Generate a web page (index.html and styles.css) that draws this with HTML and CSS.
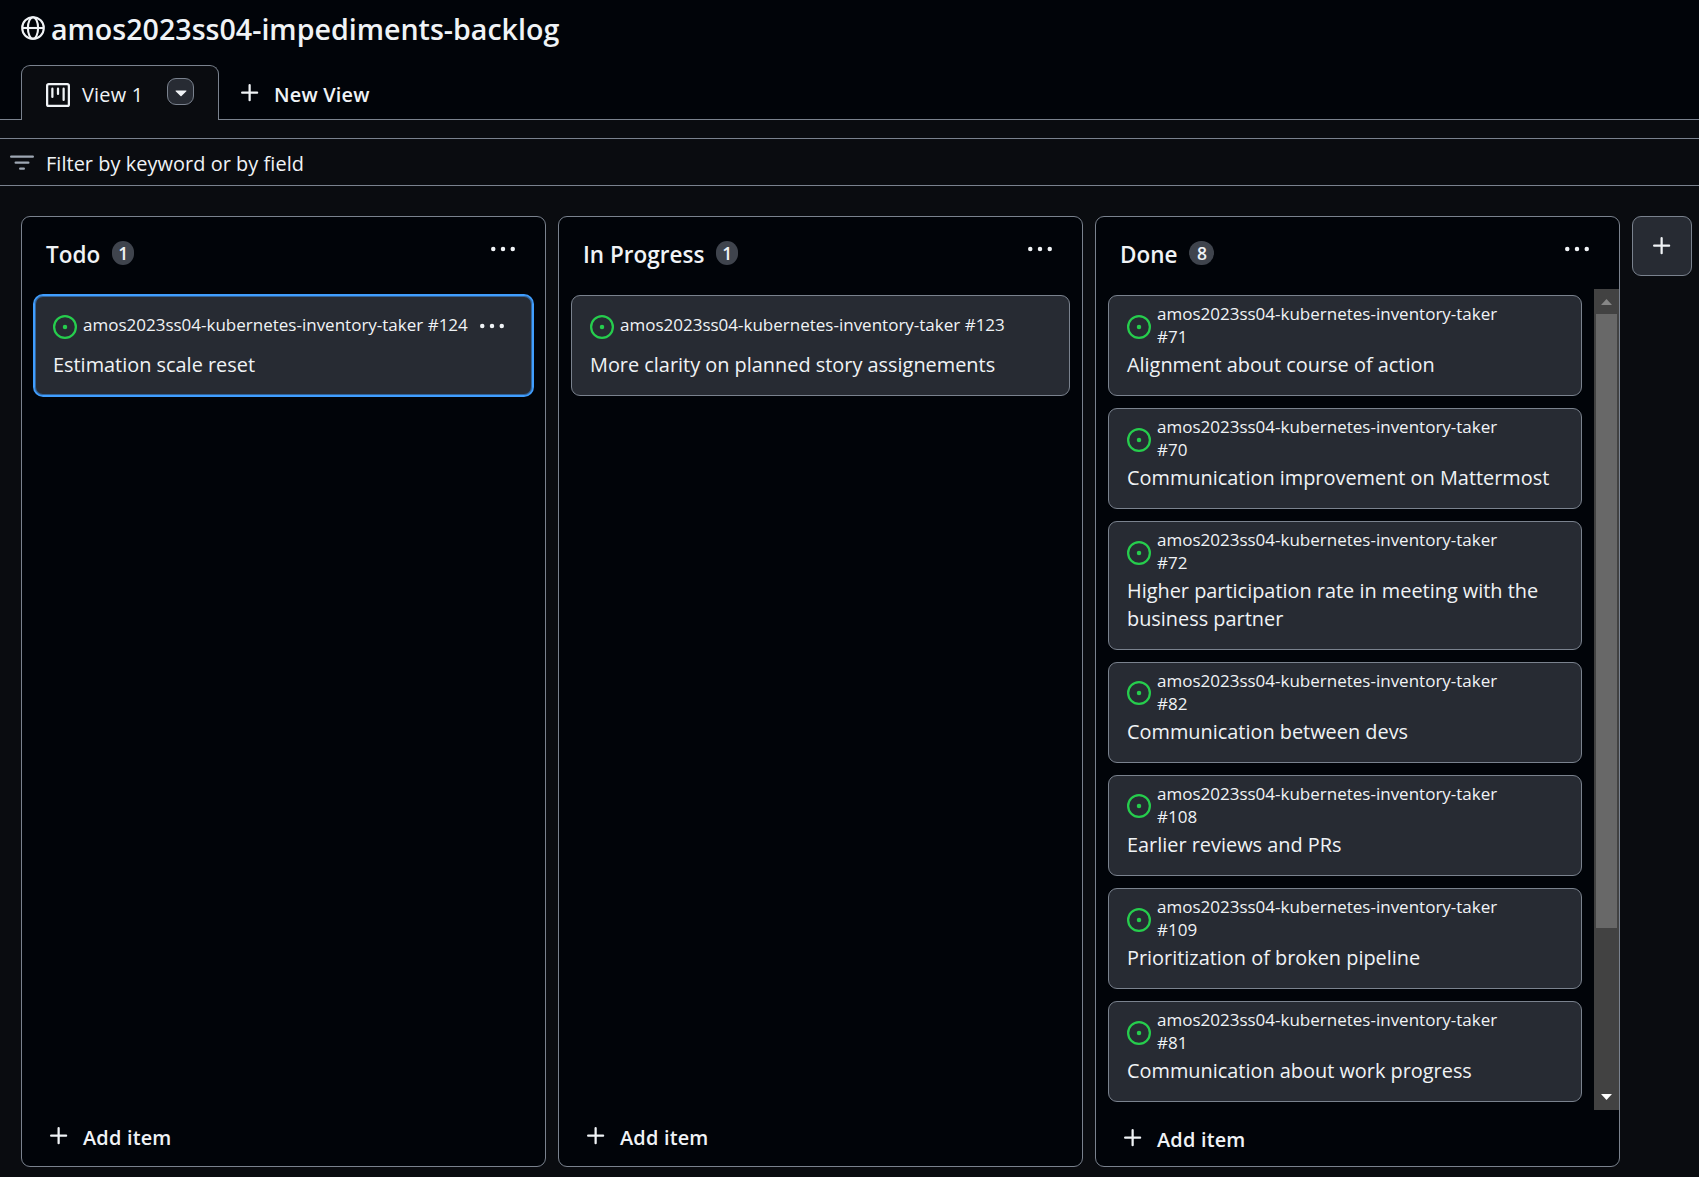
FILE: index.html
```
<!DOCTYPE html>
<html lang="en">
<head>
<meta charset="utf-8">
<title>amos2023ss04-impediments-backlog</title>
<link rel="stylesheet" href="styles.css">
</head>
<body>
<svg width="0" height="0" class="sprite" aria-hidden="true">
  <symbol id="issue" viewBox="0 0 16 16"><path d="M8 9.5a1.5 1.5 0 1 0 0-3 1.5 1.5 0 0 0 0 3Z"/><path d="M8 0a8 8 0 1 1 0 16A8 8 0 0 1 8 0ZM1.5 8a6.5 6.5 0 1 0 13 0 6.5 6.5 0 0 0-13 0Z"/></symbol>
  <symbol id="dots" viewBox="0 0 16 16"><path d="M8 9.5a1.5 1.5 0 1 0 0-3 1.5 1.5 0 0 0 0 3ZM1.5 9.5a1.5 1.5 0 1 0 0-3 1.5 1.5 0 0 0 0 3ZM14.5 9.5a1.5 1.5 0 1 0 0-3 1.5 1.5 0 0 0 0 3Z"/></symbol>
  <symbol id="plus" viewBox="0 0 16 16"><path d="M7.75 2a.75.75 0 0 1 .75.75V7h4.25a.75.75 0 0 1 0 1.5H8.5v4.25a.75.75 0 0 1-1.5 0V8.5H2.75a.75.75 0 0 1 0-1.5H7V2.75A.75.75 0 0 1 7.75 2Z"/></symbol>
</svg>

<header class="title-bar">
  <svg class="icon" viewBox="0 0 16 16"><g fill="none" stroke="currentColor" stroke-width="1.4"><circle cx="8" cy="8" r="7.2"/><ellipse cx="8" cy="8" rx="3.4" ry="7.2"/><path d="M.8 8h14.4"/></g></svg>
  <h1>amos2023ss04-impediments-backlog</h1>
</header>

<nav class="tabs">
  <div class="tab">
    <svg class="icon" viewBox="0 0 16 16"><path fill-rule="evenodd" d="M1.75 0h12.5C15.216 0 16 .784 16 1.750v12.500A1.750 1.750 0 0 1 14.250 16H1.750A1.750 1.750 0 0 1 0 14.250V1.750C0 .784.784 0 1.750 0ZM1.500 1.750v12.500c0 .138.112.25.25.25h12.500a.25.25 0 0 0 .25-.25V1.750a.25.25 0 0 0-.25-.25H1.750a.25.25 0 0 0-.25.25ZM11.750 3a.75.75 0 0 1 .75.75v7.500a.75.75 0 0 1-1.500 0v-7.500a.75.75 0 0 1 .75-.75Zm-8.250.75a.75.75 0 0 1 1.500 0v5.500a.75.75 0 0 1-1.500 0ZM8 3a.75.75 0 0 1 .75.75v3.500a.75.75 0 0 1-1.500 0v-3.500A.75.75 0 0 1 8 3Z"/></svg>
    <span class="tab-name">View 1</span>
    <button class="tab-menu" aria-label="View options"><svg class="icon" viewBox="0 0 16 16"><path d="m4.427 7.427 3.396 3.396a.25.25 0 0 0 .354 0l3.396-3.396A.25.25 0 0 0 11.396 7H4.604a.25.25 0 0 0-.177.427Z"/></svg></button>
  </div>
  <div class="new-view"><svg class="icon"><use href="#plus"/></svg><span>New View</span></div>
</nav>

<div class="filter">
  <svg class="icon" viewBox="0 0 16 16"><path d="M.75 3h14.5a.75.75 0 0 1 0 1.5H.75a.75.75 0 0 1 0-1.5ZM3 7.75A.75.75 0 0 1 3.75 7h8.5a.75.75 0 0 1 0 1.5h-8.5A.75.75 0 0 1 3 7.75Zm3 4a.75.75 0 0 1 .75-.75h2.5a.75.75 0 0 1 0 1.5h-2.5a.75.75 0 0 1-.75-.75Z"/></svg>
  <span>Filter by keyword or by field</span>
</div>

<main class="board">
  <section class="column">
    <div class="column-head"><h2>Todo</h2><span class="count">1</span><svg class="icon more"><use href="#dots"/></svg></div>
    <div class="column-body"><div class="cards">
      <article class="card selected"><div class="ref"><svg class="icon"><use href="#issue"/></svg><span>amos2023ss04-kubernetes-inventory-taker #124</span><svg class="icon card-more"><use href="#dots"/></svg></div><p>Estimation scale reset</p></article>
    </div></div>
    <div class="add"><svg class="icon"><use href="#plus"/></svg><span>Add item</span></div>
  </section>

  <section class="column">
    <div class="column-head"><h2>In Progress</h2><span class="count">1</span><svg class="icon more"><use href="#dots"/></svg></div>
    <div class="column-body"><div class="cards">
      <article class="card"><div class="ref"><svg class="icon"><use href="#issue"/></svg><span>amos2023ss04-kubernetes-inventory-taker #123</span></div><p>More clarity on planned story assignements</p></article>
    </div></div>
    <div class="add"><svg class="icon"><use href="#plus"/></svg><span>Add item</span></div>
  </section>

  <section class="column scrolls">
    <div class="column-head"><h2>Done</h2><span class="count">8</span><svg class="icon more"><use href="#dots"/></svg></div>
    <div class="column-body"><div class="cards">
      <article class="card"><div class="ref"><svg class="icon"><use href="#issue"/></svg><span>amos2023ss04-kubernetes-inventory-taker<br>#71</span></div><p>Alignment about course of action</p></article>
      <article class="card"><div class="ref"><svg class="icon"><use href="#issue"/></svg><span>amos2023ss04-kubernetes-inventory-taker<br>#70</span></div><p>Communication improvement on Mattermost</p></article>
      <article class="card"><div class="ref"><svg class="icon"><use href="#issue"/></svg><span>amos2023ss04-kubernetes-inventory-taker<br>#72</span></div><p>Higher participation rate in meeting with the<br>business partner</p></article>
      <article class="card"><div class="ref"><svg class="icon"><use href="#issue"/></svg><span>amos2023ss04-kubernetes-inventory-taker<br>#82</span></div><p>Communication between devs</p></article>
      <article class="card"><div class="ref"><svg class="icon"><use href="#issue"/></svg><span>amos2023ss04-kubernetes-inventory-taker<br>#108</span></div><p>Earlier reviews and PRs</p></article>
      <article class="card"><div class="ref"><svg class="icon"><use href="#issue"/></svg><span>amos2023ss04-kubernetes-inventory-taker<br>#109</span></div><p>Prioritization of broken pipeline</p></article>
      <article class="card"><div class="ref"><svg class="icon"><use href="#issue"/></svg><span>amos2023ss04-kubernetes-inventory-taker<br>#81</span></div><p>Communication about work progress</p></article>
    </div>
    <div class="scrollbar">
      <svg class="arrow up" viewBox="0 0 25 25"><path d="M7 16h11l-5.500-6z"/></svg>
      <div class="thumb"></div>
      <svg class="arrow down" viewBox="0 0 25 25"><path d="M7 9h11l-5.500 6z"/></svg>
    </div></div>
    <div class="add"><svg class="icon"><use href="#plus"/></svg><span>Add item</span></div>
  </section>

  <button class="add-column" aria-label="Add column"><svg class="icon"><use href="#plus"/></svg></button>
</main>
</body>
</html>
```
FILE: styles.css
```
* { box-sizing: border-box; }
body {
  margin: 0;
  height: 1177px;
  overflow: hidden;
  display: flex;
  flex-direction: column;
  background: #0a0c10;
  color: #f0f3f6;
  font-family: "Open Sans", "Noto Sans", sans-serif;
  font-size: 19.9px;
  line-height: 27px;
}
h1, h2, p { margin: 0; }
.sprite { display: none; }
.icon { width: 24px; height: 24px; flex: none; fill: currentColor; display: block; }
button { padding: 0; color: inherit; }

.title-bar {
  height: 65px;
  flex: none;
  display: flex;
  align-items: flex-start;
  gap: 6px;
  padding: 16px 0 0 21px;
  background: #010409;
}
h1 { font-size: 28.6px; line-height: 38px; font-weight: 600; margin-top: -6px; white-space: nowrap; }

.tabs {
  height: 55px;
  flex: none;
  display: flex;
  padding-left: 21px;
  background: linear-gradient(#7a828e, #7a828e) bottom / 100% 1px no-repeat #010409;
}
.tab {
  width: 198px;
  display: flex;
  align-items: flex-start;
  padding: 17px 0 0 24px;
  border: 1px solid #7a828e;
  border-bottom: 0;
  border-radius: 9px 9px 0 0;
  background: #0a0c10;
}
.tab-name { width: 85px; margin: -2px 0 0 12px; letter-spacing: 0.2px; }
.tab-menu {
  width: 27px;
  height: 27px;
  margin-top: -5px;
  border: 1px solid #7a828e;
  border-radius: 9px;
  background: #272b33;
  display: grid;
  place-items: center;
}
.new-view { display: flex; padding: 16px 0 0 19px; gap: 12px; font-weight: 600; letter-spacing: 0.2px; }

.filter {
  height: 48px;
  flex: none;
  margin-top: 18px;
  padding-left: 10px;
  display: flex;
  align-items: center;
  gap: 12px;
  border: 1px solid #7a828e;
  border-width: 1px 0;
}
.filter .icon { color: #9ea7b3; margin-top: 2px; }
.filter span { margin-top: 3px; letter-spacing: 0.06px; }

.board {
  flex: 1;
  display: flex;
  align-items: flex-start;
  gap: 12px;
  padding: 30px 0 0 21px;
}
.column {
  width: 525px;
  height: 951px;
  flex: none;
  display: flex;
  flex-direction: column;
  border: 1px solid #7a828e;
  border-radius: 9px;
  background: #010409;
}
.column-head { height: 72px; flex: none; display: flex; padding: 20px 30px 0 24px; }
h2 { font-size: 22.5px; line-height: 34px; font-weight: 600; margin-top: 1px; }
.count {
  width: 22px;
  height: 24px;
  margin: 4px 0 0 12px;
  border-radius: 12px;
  background: #3f444d;
  font-size: 17.5px;
  line-height: 24px;
  font-weight: 600;
  text-align: center;
}
.scrolls .count { width: 25px; }
.more { margin-left: auto; }
.column-body { flex: 1; min-height: 0; display: flex; }
.cards { flex: 1; display: flex; flex-direction: column; gap: 12px; padding: 6px 12px 0; }
.card {
  flex: none;
  padding: 6px 18px 16.5px;
  border: 1px solid #7a828e;
  border-radius: 9px;
  background: #272b33;
}
.card.selected { border-color: #409eff; box-shadow: 0 0 0 1px #409eff, inset 0 0 0 1px #409eff80; }
.ref {
  height: 49px;
  display: flex;
  align-items: center;
  gap: 6px;
  font-size: 17px;
  line-height: 23.2px;
  white-space: nowrap;
}
.ref span { margin-top: -3px; }
.ref .icon { color: #26cd4d; }
.ref .card-more { color: #f0f3f6; margin: -2px 0 0 6px; }
.card p { white-space: nowrap; line-height: 27.6px; }

.scrollbar { width: 25px; flex: none; display: flex; flex-direction: column; background: #424242; }
.arrow { width: 25px; height: 25px; flex: none; }
.up { fill: #868686; }
.down { fill: #fff; margin-top: auto; }
.thumb { height: 614px; margin: 0 2px; background: #686868; }

.add { height: 65px; flex: none; display: flex; padding: 23px 0 0 25px; gap: 12px; font-weight: 600; letter-spacing: 0.2px; }
.scrolls .add { height: 56px; padding-top: 16px; }

.add-column {
  width: 60px;
  height: 60px;
  border: 1px solid #7a828e;
  border-radius: 9px;
  background: #272b33;
  display: grid;
  place-items: center;
}
```
